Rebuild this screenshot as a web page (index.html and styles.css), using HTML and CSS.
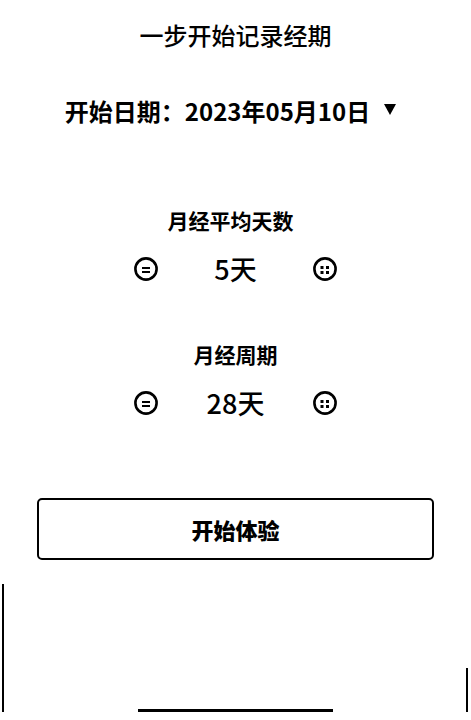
FILE: index.html
```html
<!DOCTYPE html>
<html lang="zh-CN">

<head>
    <meta charset="UTF-8">
    <meta name="viewport" content="width=device-width, initial-scale=1.0">
    <title>一步开始记录经期</title>
    <link rel="stylesheet" href="styles.css">
</head>

<body>

    <div class="screen">
        <h1 class="title">一步开始记录经期</h1>

        <div class="date-picker">
            <span class="date-text">开始日期：2023年05月10日</span>
            <span class="caret"></span>
        </div>

        <section class="setting setting-days">
            <h2 class="setting-label">月经平均天数</h2>
            <div class="stepper">
                <button class="step-btn" title="减少">
                    <svg width="24" height="24" viewBox="0 0 24 24">
                        <circle cx="12" cy="12" r="10.6" fill="none" stroke="#000" stroke-width="2.6" />
                        <rect x="8" y="10" width="8" height="2" />
                        <rect x="8" y="14" width="8" height="2" />
                    </svg>
                </button>
                <span class="step-value">5天</span>
                <button class="step-btn" title="增加">
                    <svg width="24" height="24" viewBox="0 0 24 24">
                        <circle cx="12" cy="12" r="10.6" fill="none" stroke="#000" stroke-width="2.6" />
                        <rect x="7.5" y="9" width="3" height="3" />
                        <rect x="13" y="9" width="3" height="3" />
                        <rect x="7.5" y="14" width="3" height="3" />
                        <rect x="13" y="14" width="3" height="3" />
                    </svg>
                </button>
            </div>
        </section>

        <section class="setting setting-cycle">
            <h2 class="setting-label">月经周期</h2>
            <div class="stepper">
                <button class="step-btn" title="减少">
                    <svg width="24" height="24" viewBox="0 0 24 24">
                        <circle cx="12" cy="12" r="10.6" fill="none" stroke="#000" stroke-width="2.6" />
                        <rect x="8" y="10" width="8" height="2" />
                        <rect x="8" y="14" width="8" height="2" />
                    </svg>
                </button>
                <span class="step-value">28天</span>
                <button class="step-btn" title="增加">
                    <svg width="24" height="24" viewBox="0 0 24 24">
                        <circle cx="12" cy="12" r="10.6" fill="none" stroke="#000" stroke-width="2.6" />
                        <rect x="7.5" y="9" width="3" height="3" />
                        <rect x="13" y="9" width="3" height="3" />
                        <rect x="7.5" y="14" width="3" height="3" />
                        <rect x="13" y="14" width="3" height="3" />
                    </svg>
                </button>
            </div>
        </section>

        <button class="start-btn">开始体验</button>

        <div class="home-bar"></div>

        <span class="edge edge-left"></span>
        <span class="edge edge-right"></span>
    </div>

</body>

</html>
```

FILE: styles.css
```css
body {
    background: #fff;
    margin: 0;
    font-family: "Noto Sans CJK SC", "Noto Sans", sans-serif;
    color: #000;
}

.screen {
    position: relative;
    width: 471px;
    height: 720px;
    padding-top: 18px;
    box-sizing: border-box;
    display: flex;
    flex-direction: column;
    align-items: center;
    overflow: hidden;
}

.title {
    margin: 0;
    font-size: 24px;
    line-height: 34px;
    font-weight: 500;
}

.date-picker {
    margin-top: 42px;
    padding-right: 10px;
    display: flex;
    align-items: center;
    gap: 14px;
    line-height: 34px;
}

.date-text {
    font-size: 24px;
    font-weight: 700;
}

.caret {
    width: 0;
    height: 0;
    border-left: 6px solid transparent;
    border-right: 6px solid transparent;
    border-top: 11px solid #000;
    margin-top: -4px;
}

.setting {
    margin-top: 77px;
    display: flex;
    flex-direction: column;
    align-items: center;
}

.setting-days .setting-label {
    padding-right: 10px;
}

.setting-cycle {
    margin-top: 55px;
}

.setting-label {
    margin: 0;
    font-size: 21px;
    line-height: 30px;
    font-weight: 700;
}

.stepper {
    margin-top: 19px;
    display: flex;
    align-items: center;
    height: 30px;
}

.step-btn {
    background: none;
    border: none;
    padding: 0;
    width: 24px;
    height: 24px;
    cursor: pointer;
    display: flex;
}

.step-value {
    width: 155px;
    text-align: center;
    font-size: 27px;
    line-height: 30px;
    font-weight: 500;
}

.start-btn {
    margin-top: 80px;
    width: 397px;
    height: 62px;
    background: #fff;
    border: 2px solid #000;
    border-radius: 5px;
    font-family: inherit;
    font-size: 22px;
    font-weight: 900;
    color: #000;
    cursor: pointer;
}

.home-bar {
    margin-top: 149px;
    width: 195px;
    height: 3px;
    background: #000;
}

.edge {
    position: absolute;
    bottom: 8px;
    width: 2px;
    background: #000;
}

.edge-left {
    left: 2px;
    height: 128px;
}

.edge-right {
    right: 3px;
    height: 44px;
}
```
